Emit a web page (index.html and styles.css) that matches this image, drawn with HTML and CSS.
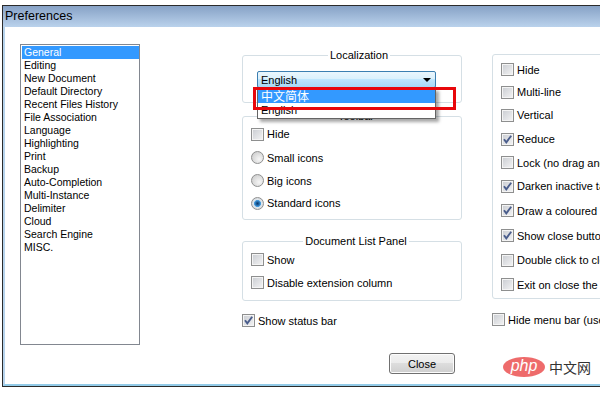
FILE: index.html
```html
<!DOCTYPE html>
<html>
<head>
<meta charset="utf-8">
<link rel="stylesheet" href="styles.css">
</head>
<body>
<div class="window">
  <div class="titlebar">Preferences</div>
  <div class="client">
    <div class="main">
      <ul class="list">
        <li class="sel">General</li>
        <li>Editing</li>
        <li>New Document</li>
        <li>Default Directory</li>
        <li>Recent Files History</li>
        <li>File Association</li>
        <li>Language</li>
        <li>Highlighting</li>
        <li>Print</li>
        <li>Backup</li>
        <li>Auto-Completion</li>
        <li>Multi-Instance</li>
        <li>Delimiter</li>
        <li>Cloud</li>
        <li>Search Engine</li>
        <li>MISC.</li>
      </ul>
      <div class="middle">
        <fieldset class="group loc">
          <legend>Localization</legend>
          <div class="combo-wrap">
            <div class="combo"><span>English</span><span class="arrow"></span></div>
            <div class="dropdown">
              <div class="opt sel">中文简体</div>
              <div class="opt">English</div>
            </div>
            <div class="mark"></div>
          </div>
        </fieldset>
        <fieldset class="group toolbar">
          <legend>Toolbar</legend>
          <div class="row first"><span class="cb"></span>Hide</div>
          <div class="row"><span class="rb"></span>Small icons</div>
          <div class="row"><span class="rb"></span>Big icons</div>
          <div class="row last"><span class="rb on"></span>Standard icons</div>
        </fieldset>
        <fieldset class="group doclist">
          <legend>Document List Panel</legend>
          <div class="row"><span class="cb"></span>Show</div>
          <div class="row"><span class="cb"></span>Disable extension column</div>
        </fieldset>
        <div class="row solo"><span class="cb"><svg viewBox="0 0 11 11"><path d="M2 5.2 L4.3 8.3 L9.2 1.8" /></svg></span>Show status bar</div>
      </div>
      <div class="right">
        <fieldset class="group tabbar">
          <legend>Tab Bar</legend>
          <div class="row r1"><span class="cb"></span>Hide</div>
          <div class="row r2"><span class="cb"></span>Multi-line</div>
          <div class="row r3"><span class="cb"></span>Vertical</div>
          <div class="row r4"><span class="cb"><svg viewBox="0 0 11 11"><path d="M2 5.2 L4.3 8.3 L9.2 1.8" /></svg></span>Reduce</div>
          <div class="row r5"><span class="cb"></span>Lock (no drag and drop)</div>
          <div class="row r6"><span class="cb"><svg viewBox="0 0 11 11"><path d="M2 5.2 L4.3 8.3 L9.2 1.8" /></svg></span>Darken inactive tabs</div>
          <div class="row r7"><span class="cb"><svg viewBox="0 0 11 11"><path d="M2 5.2 L4.3 8.3 L9.2 1.8" /></svg></span>Draw a coloured bar on active tab</div>
          <div class="row r8"><span class="cb"><svg viewBox="0 0 11 11"><path d="M2 5.2 L4.3 8.3 L9.2 1.8" /></svg></span>Show close button on each tab</div>
          <div class="row r9"><span class="cb"></span>Double click to close document</div>
          <div class="row r10"><span class="cb"></span>Exit on close the last tab</div>
        </fieldset>
        <div class="row solo"><span class="cb"></span>Hide menu bar (use Alt or F10 key)</div>
      </div>
    </div>
    <div class="footer"><button class="btn">Close</button></div>
  </div>
</div>
<div class="watermark"><span class="php">php</span><span class="cn">中文网</span></div>
</body>
</html>
```

FILE: styles.css
```css
html, body {
  margin: 0;
  padding: 0;
  width: 600px;
  height: 400px;
  overflow: hidden;
  background: #fff;
  position: relative;
  font-family: "Liberation Sans", Arial, sans-serif;
  font-size: 11px;
  color: #000;
}

.window {
  margin: 5px 0 0 2px;
  width: 840px;
  border-top: 1px solid #2b2b2b;
  border-left: 1px solid #2b2b2b;
  border-bottom: 1px solid #2b2b2b;
}

.titlebar {
  height: 21px;
  line-height: 21px;
  padding-left: 2px;
  font-size: 12.5px;
  background: linear-gradient(#87a2c6, #bad2ec);
  color: #000;
}

.client {
  height: 359px;
  box-sizing: border-box;
  border-left: 2px solid #b6d3ec;
  border-bottom: 2px solid #93cbe8;
  padding: 17px 0 0 15px;
  background: #fff;
}

.main {
  display: flex;
  align-items: flex-start;
}

.list {
  list-style: none;
  margin: 0;
  width: 120px;
  height: 301px;
  box-sizing: border-box;
  border: 1px solid #828790;
  padding: 1px 0 0 1px;
  font-size: 10.5px;
}

.list li {
  height: 13px;
  line-height: 13px;
  padding-left: 2px;
  white-space: nowrap;
}

.list li.sel {
  background: #3399ff;
  color: #fff;
}

.middle {
  width: 220px;
  margin-left: 102px;
  padding-top: 5px;
}

.right {
  width: 330px;
  margin-left: 30px;
  padding-top: 6px;
}

.group {
  margin: 0;
  border: 1px solid #d5dfe5;
  border-radius: 3px;
  padding: 0 0 0 8px;
  min-width: 0;
}

.group legend {
  margin: 0 auto;
  padding: 0 2px;
  line-height: 13px;
  font-size: 11px;
}

.row {
  display: flex;
  align-items: center;
  height: 23px;
  white-space: nowrap;
}

.cb {
  flex: none;
  width: 13px;
  height: 13px;
  box-sizing: border-box;
  border: 1px solid #8e8f8f;
  margin-right: 3px;
  background: linear-gradient(135deg, #c9ccd1, #f4f4f5);
  box-shadow: inset 0 0 0 1px #f4f4f4;
  display: flex;
}

.cb svg {
  width: 11px;
  height: 11px;
}

.cb svg path {
  fill: none;
  stroke: #4a5d8c;
  stroke-width: 1.9;
}

.rb {
  flex: none;
  width: 13px;
  height: 13px;
  box-sizing: border-box;
  border: 1px solid #8f9090;
  border-radius: 50%;
  margin-right: 3px;
  background: radial-gradient(circle at 65% 65%, #f6f6f6 0, #dcdcdc 55%, #c4c4c4 100%);
}

.rb.on {
  background: radial-gradient(circle at 50% 50%, #0d3a6a 0, #1e5f9c 1.5px, #4aa0e2 3.2px, #dfe6ec 3.8px, #cfcfcf 100%);
}

/* Localization */
.loc {
  padding-top: 9px;
  padding-bottom: 14px;
  padding-left: 14px;
}

.combo-wrap {
  position: relative;
  width: 179px;
  z-index: 2;
}

.combo {
  height: 17px;
  box-sizing: border-box;
  border: 1px solid #3c7fb1;
  border-radius: 2px;
  background: linear-gradient(#eaf6fd 0, #d9f0fc 50%, #bee6fd 50%, #a7d9f5 100%);
  display: flex;
  align-items: center;
  justify-content: space-between;
  padding: 0 4px 0 3px;
}

.arrow {
  width: 0;
  height: 0;
  border-left: 4px solid transparent;
  border-right: 4px solid transparent;
  border-top: 4px solid #000;
}

.dropdown {
  position: absolute;
  top: 17px;
  left: 0;
  width: 179px;
  box-sizing: border-box;
  border: 1px solid #646464;
  background: #fff;
  box-shadow: 3px 3px 3px rgba(0, 0, 0, 0.35);
  padding-bottom: 1px;
}

.opt {
  height: 14px;
  line-height: 14px;
  padding-left: 3px;
}

.opt.sel {
  background: #3399ff;
  color: #fff;
  font-family: "Noto Sans CJK SC", sans-serif;
  font-size: 12px;
}

.mark {
  position: absolute;
  top: 16px;
  left: -4px;
  width: 203px;
  height: 23px;
  box-sizing: border-box;
  border: 3px solid #e8070b;
}

/* Toolbar */
.toolbar {
  margin-top: 7px;
  padding-bottom: 5px;
}

.toolbar .first {
  height: 24px;
  margin-top: -1px;
}

.toolbar .last {
  height: 22px;
}

.doclist {
  margin-top: 14px;
  padding-bottom: 6px;
}

.doclist legend {
  line-height: 14px;
}

.middle .solo {
  margin-top: 8px;
}

.tabbar {
  padding-bottom: 1px;
}

.tabbar legend {
  line-height: 8px;
}

.tabbar .r1 { height: 23px; }
.tabbar .r2 { height: 22px; }
.tabbar .r3 { height: 24px; }
.tabbar .r4 { height: 24px; }
.tabbar .r5 { height: 23px; }
.tabbar .r6 { height: 24px; }
.tabbar .r7 { height: 25px; }
.tabbar .r8 { height: 25px; }
.tabbar .r9 { height: 24px; }
.tabbar .r10 { height: 25px; }

.right .solo {
  margin-top: 9px;
}

.footer {
  padding: 8px 0 0 369px;
}

.btn {
  display: block;
  width: 66px;
  height: 21px;
  padding: 0;
  border: 1px solid #707070;
  border-radius: 3px;
  background: linear-gradient(#f2f2f2 0, #ebebeb 50%, #dddddd 50%, #cfcfcf 100%);
  box-shadow: inset 0 0 0 1px #fcfcfc;
  font-family: "Liberation Sans", Arial, sans-serif;
  font-size: 11px;
  color: #000;
}

.watermark {
  position: absolute;
  left: 503px;
  top: 357px;
  display: flex;
  align-items: center;
}

.php {
  width: 42px;
  height: 20px;
  border-radius: 50%;
  background: #ee6b6b;
  color: #fff;
  font-style: italic;
  font-size: 16px;
  line-height: 18px;
  text-align: center;
  font-family: "Liberation Sans", Arial, sans-serif;
}

.cn {
  margin-left: 4px;
  font-family: "Noto Sans CJK SC", sans-serif;
  font-size: 14px;
  color: #333;
}
```
